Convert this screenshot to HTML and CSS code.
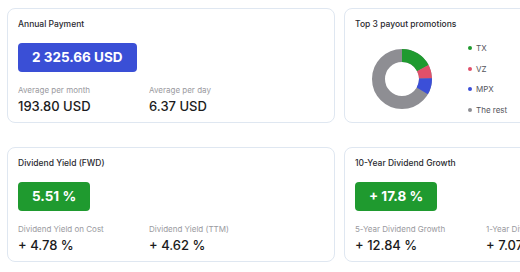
FILE: index.html
```html
<!DOCTYPE html>
<html lang="en">

<head>
    <meta charset="UTF-8">
    <meta name="viewport" content="width=device-width, initial-scale=1.0">
    <title>Dividends</title>
    <link rel="stylesheet" href="styles.css">
</head>

<body>
    <div class="board">
        <!-- 年度支付 -->
        <div class="card">
            <p class="title">Annual Payment</p>
            <div class="badge blue">2 325.66 USD</div>
            <div class="stats">
                <div>
                    <p class="label">Average per month</p>
                    <p class="value">193.80 USD</p>
                </div>
                <div>
                    <p class="label">Average per day</p>
                    <p class="value">6.37 USD</p>
                </div>
            </div>
        </div>

        <!-- 前三名 -->
        <div class="card">
            <p class="title">Top 3 payout promotions</p>
            <div class="chart">
                <svg class="donut" width="62" height="62" viewBox="0 0 62 62">
                    <!-- r=23.5, 周长约 147.65 -->
                    <g transform="rotate(-90 31 31)" fill="none" stroke-width="13">
                        <circle cx="31" cy="31" r="23.5" stroke="#8e8e93"></circle>
                        <circle cx="31" cy="31" r="23.5" stroke="#1f9a2f" stroke-dasharray="25.4 200"></circle>
                        <circle cx="31" cy="31" r="23.5" stroke="#e0506a" stroke-dasharray="0 25.4 10.7 200"></circle>
                        <circle cx="31" cy="31" r="23.5" stroke="#3b4fd8" stroke-dasharray="0 36.1 13 200"></circle>
                    </g>
                </svg>
                <ul class="legend">
                    <li><span class="dot green"></span>TX</li>
                    <li><span class="dot red"></span>VZ</li>
                    <li><span class="dot navy"></span>MPX</li>
                    <li><span class="dot grey"></span>The rest</li>
                </ul>
            </div>
        </div>

        <!-- 股息率 -->
        <div class="card">
            <p class="title">Dividend Yield (FWD)</p>
            <div class="badge green">5.51 %</div>
            <div class="stats">
                <div>
                    <p class="label">Dividend Yield on Cost</p>
                    <p class="value">+ 4.78 %</p>
                </div>
                <div>
                    <p class="label">Dividend Yield (TTM)</p>
                    <p class="value">+ 4.62 %</p>
                </div>
            </div>
        </div>

        <!-- 增长 -->
        <div class="card">
            <p class="title">10-Year Dividend Growth</p>
            <div class="badge green">+ 17.8 %</div>
            <div class="stats">
                <div>
                    <p class="label">5-Year Dividend Growth</p>
                    <p class="value">+ 12.84 %</p>
                </div>
                <div>
                    <p class="label">1-Year Dividend Growth</p>
                    <p class="value">+ 7.07 %</p>
                </div>
            </div>
        </div>
    </div>
</body>

</html>
```

FILE: styles.css
```css
html,
body {
    margin: 0;
    overflow: hidden;
    background: #fff;
}

body {
    font-family: Inter, "Open Sans", sans-serif;
    color: #1f1f24;
}

p {
    margin: 0;
}

.board {
    display: grid;
    grid-template-columns: 328px 328px;
    column-gap: 9px;
    row-gap: 24px;
    padding: 8px 0 0 7px;
    width: max-content;
}

.card {
    box-sizing: border-box;
    height: 115px;
    padding: 9px 10px 0;
    border: 1px solid #dfe7f1;
    border-radius: 8px;
}

.title {
    font-size: 8.5px;
    line-height: 12px;
    font-weight: 500;
    color: #2a2a30;
}

.badge {
    display: inline-block;
    margin-top: 13px;
    height: 29px;
    line-height: 29px;
    padding: 0 14px;
    border-radius: 4px;
    color: #fff;
    font-size: 13.5px;
    font-weight: 700;
}

.blue {
    background: #3a4fd6;
}

.green {
    background: #1f9a2f;
}

.stats {
    display: grid;
    grid-template-columns: 131px 131px;
    margin-top: 13px;
    white-space: nowrap;
}

.label {
    font-size: 8px;
    line-height: 10px;
    color: #9a9aa0;
}

.value {
    margin-top: 2px;
    font-size: 13px;
    line-height: 18px;
    font-weight: 500;
    color: #1b1b20;
}

.chart {
    display: flex;
    align-items: center;
    margin-top: 8px;
}

.donut {
    margin-left: 16px;
}

.legend {
    list-style: none;
    margin: 0 0 0 35px;
    padding: 0;
    font-size: 8px;
    color: #55555c;
}

.legend li {
    display: flex;
    align-items: center;
    height: 20.5px;
}

.dot {
    width: 4px;
    height: 4px;
    border-radius: 50%;
    margin-right: 4px;
}

.dot.green {
    background: #1f9a2f;
}

.dot.red {
    background: #e0506a;
}

.dot.navy {
    background: #3b4fd8;
}

.dot.grey {
    background: #8e8e93;
}
```
